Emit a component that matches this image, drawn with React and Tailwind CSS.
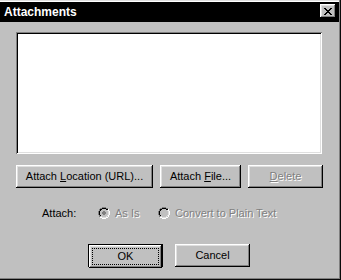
import React from 'react'

const raised =
  'shadow-[inset_-1px_-1px_#000,inset_1px_1px_#fff,inset_-2px_-2px_#808080,inset_2px_2px_#dfdfdf]'

function Button({ children, className = '', disabled }) {
  return (
    <div
      className={`flex h-[23px] items-center justify-center bg-[#c0c0c0] ${raised} ${
        disabled ? 'text-[#808080] [text-shadow:1px_1px_0_#fff]' : 'text-black'
      } ${className}`}>
      <span className="flex h-full w-full items-center justify-center whitespace-pre">{children}</span>
    </div>
  )
}

function CloseGlyph() {
  const rows = ['11000011', '01100110', '00111100', '00011000', '00111100', '01100110', '11000011']
  return (
    <svg width="8" height="7" viewBox="0 0 8 7" shapeRendering="crispEdges">
      {rows.map((r, y) =>
        r.split('').map((c, x) => (c === '1' ? <rect key={`${x}-${y}`} x={x} y={y} width="1" height="1" fill="#000" /> : null))
      )}
    </svg>
  )
}

function Radio({ checked }) {
  return (
    <svg width="12" height="12" viewBox="0 0 12 12" shapeRendering="crispEdges">
      <path d="M4 0h4v1H4zM2 1h2v1H2zM8 1h2v1H8zM1 2h1v2H1zM0 4h1v4H0zM1 8h1v2H1z" fill="#808080" />
      <path d="M4 1h4v1H4zM2 2h2v1H2zM8 2h2v1H8zM2 3h1v1H2zM1 4h1v4H1zM2 8h1v1H2z" fill="#000" />
      <path d="M10 2h1v2h-1zM11 4h1v4h-1zM10 8h1v2h-1zM8 10h2v1H8zM2 10h2v1H2zM4 11h4v1H4z" fill="#fff" />
      <path d="M9 3h1v1H9zM10 4h1v4h-1zM9 8h1v1H9zM8 9h1v1H8zM3 9h1v1H3zM4 10h4v1H4z" fill="#dfdfdf" />
      <path d="M4 2h4v1h1v1h1v4H9v1H8v1H4V9H3V8H2V4h1V3h1z" fill="#c0c0c0" />
      {checked && <path d="M5 4h2v1h1v2H7v1H5V7H4V5h1z" fill="#808080" />}
    </svg>
  )
}

export default function App() {
  return (
    <div
      className="flex h-[280px] w-[341px] flex-col bg-[#c0c0c0] pt-[2px] text-[11px] shadow-[inset_-1px_-1px_#0a0a0a,inset_-2px_-2px_#808080,inset_0_1px_#dfdfdf,inset_0_2px_#fff]"
      style={{ fontFamily: '"Liberation Sans", Arial, sans-serif' }}>
      <div className="mr-[2px] flex h-[20px] items-start justify-between bg-black pl-[4px] pr-[3px] pt-[2px]">
        <span className="pt-[1px] text-[12px] font-bold leading-[14px] text-white">Attachments</span>
        <div className={`flex h-[14px] w-[16px] items-center justify-center bg-[#c0c0c0] ${raised}`}>
          <CloseGlyph />
        </div>
      </div>

      <div className="flex flex-col pl-[16px]">
        <div className="mt-[10px] h-[122px] w-[306px] bg-white shadow-[inset_1px_1px_#808080,inset_-1px_-1px_#fff,inset_2px_2px_#000,inset_-2px_-2px_#dfdfdf]" />

        <div className="mt-[11px] flex">
          <Button className="w-[137px]">
            Attach <u>L</u>ocation (URL)...
          </Button>
          <Button className="ml-[7px] w-[81px]">
            Attach <u>F</u>ile...
          </Button>
          <Button className="ml-[7px] w-[75px]" disabled>
            <u>D</u>elete
          </Button>
        </div>

        <div className="mt-[17px] flex h-[16px] items-center pl-[26px]">
          <span className="w-[56px] text-black">Attach:</span>
          <Radio checked />
          <span className="ml-[5px] w-[43px] text-[#808080] [text-shadow:1px_1px_0_#fff]">As Is</span>
          <Radio />
          <span className="ml-[5px] text-[#808080] [text-shadow:1px_1px_0_#fff]">Convert to Plain Text</span>
        </div>

        <div className="mt-[23px] flex pl-[72px]">
          <div className="h-[23px] w-[75px] border border-black">
            <Button className="h-[21px] w-full p-[3px]">
              <span className="flex h-full w-full items-center justify-center border border-dotted border-black">
                OK
              </span>
            </Button>
          </div>
          <Button className="ml-[12px] w-[75px]">Cancel</Button>
        </div>
      </div>
    </div>
  )
}
